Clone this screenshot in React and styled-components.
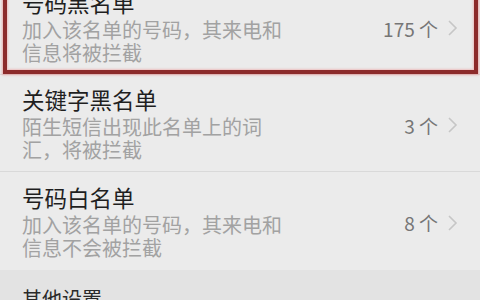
import React from "react";
import styled, { createGlobalStyle } from "styled-components";

const Global = createGlobalStyle`
  html, body { margin: 0; padding: 0; background: #ebebeb; }
  body { width: 480px; height: 300px; overflow: hidden;
    font-family: "Noto Sans CJK SC", "Noto Sans", sans-serif; }
`;

const Page = styled.div`
  position: relative;
  width: 480px;
  height: 300px;
  overflow: hidden;
  background: #ebebeb;
`;

const List = styled.div`
  margin-top: -22px;
  display: flex;
  flex-direction: column;
`;

const Row = styled.div`
  display: flex;
  align-items: center;
  height: 97px;
  padding: 0 22px;
  box-sizing: border-box;
  border-bottom: ${(p) => (p.$last ? "none" : "1px solid #d9d9d9")};
  margin-bottom: ${(p) => (p.$last ? "1px" : "0")};
`;

const Texts = styled.div`
  flex: 1;
  display: flex;
  flex-direction: column;
  padding-top: 0px;
`;

const Title = styled.div`
  font-size: 22.5px;
  line-height: 28px;
  color: #1f1f1f;
  margin-bottom: 2px;
`;

const Sub = styled.div`
  font-size: 20px;
  line-height: 23px;
  color: #a2a2a2;
  white-space: nowrap;
`;

const Count = styled.div`
  display: flex;
  align-items: center;
  gap: 9px;
  font-size: 19px;
  color: #767676;
  margin-top: 4px;
`;

const Chevron = styled.svg`
  width: 11px;
  height: 18px;
  display: block;
`;

const SectionHeader = styled.div`
  background: #e3e3e3;
  height: 40px;
  padding: 17px 22px 0;
  box-sizing: border-box;
  font-size: 20px;
  line-height: 24px;
  color: #2a2a2a;
`;

const Highlight = styled.div`
  position: absolute;
  left: 3px;
  top: -30px;
  width: 475px;
  height: 104px;
  box-sizing: border-box;
  border: 4px solid #8c2b2b;
  box-shadow: 0 0 2px 1px rgba(230, 120, 120, 0.55),
    inset 0 0 2px 1px rgba(240, 150, 150, 0.5);
  pointer-events: none;
`;

const rows = [
  { title: "号码黑名单", lines: ["加入该名单的号码，其来电和", "信息将被拦截"], count: "175" },
  { title: "关键字黑名单", lines: ["陌生短信出现此名单上的词", "汇，将被拦截"], count: "3" },
  { title: "号码白名单", lines: ["加入该名单的号码，其来电和", "信息不会被拦截"], count: "8" },
];

export default function App() {
  return (
    <Page>
      <Global />
      <List>
        {rows.map((r, i) => (
          <Row key={r.title} $last={i === rows.length - 1}>
            <Texts>
              <Title>{r.title}</Title>
              {r.lines.map((l) => (
                <Sub key={l}>{l}</Sub>
              ))}
            </Texts>
            <Count>
              <span>{r.count} 个</span>
              <Chevron viewBox="0 0 11 18">
                <polyline points="2,2 9,9 2,16" fill="none" stroke="#c6c6c6" strokeWidth="1.6" />
              </Chevron>
            </Count>
          </Row>
        ))}
        <SectionHeader>其他设置</SectionHeader>
      </List>
      <Highlight />
    </Page>
  );
}
